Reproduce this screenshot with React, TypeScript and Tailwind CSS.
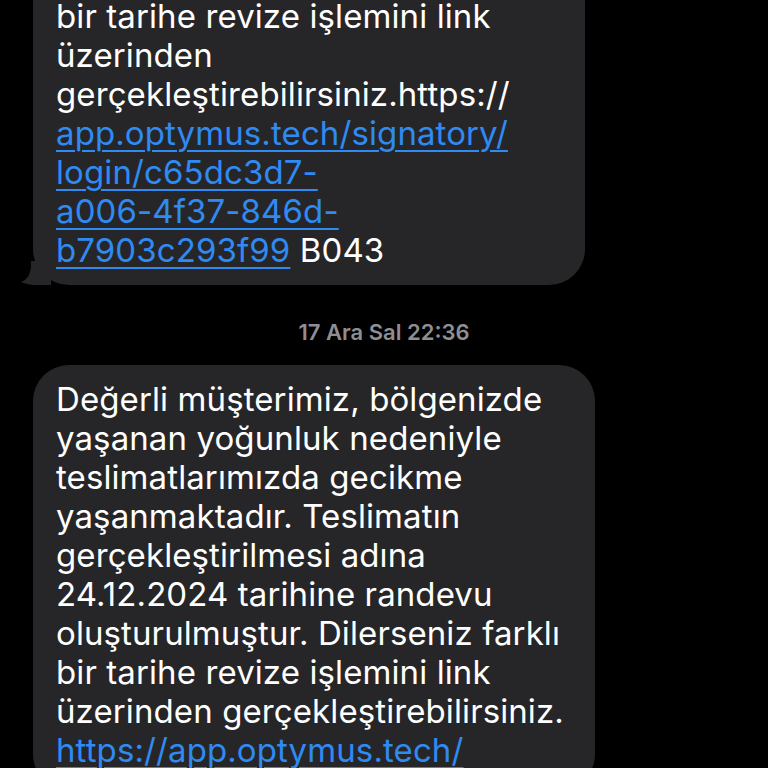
import React from 'react';

const FIRST = [
  { t: 'bir tarihe revize işlemini link' },
  { t: 'üzerinden' },
  { t: 'gerçekleştirebilirsiniz.https://' },
  { link: 'app.optymus.tech/signatory/' },
  { link: 'login/c65dc3d7-' },
  { link: 'a006-4f37-846d-' },
  { link: 'b7903c293f99', after: ' B043' },
];

const SECOND = [
  { t: 'Değerli müşterimiz, bölgenizde' },
  { t: 'yaşanan yoğunluk nedeniyle' },
  { t: 'teslimatlarımızda gecikme' },
  { t: 'yaşanmaktadır. Teslimatın' },
  { t: 'gerçekleştirilmesi adına' },
  { t: '24.12.2024 tarihine randevu' },
  { t: 'oluşturulmuştur. Dilerseniz farklı' },
  { t: 'bir tarihe revize işlemini link' },
  { t: 'üzerinden gerçekleştirebilirsiniz.' },
  { link: 'https://app.optymus.tech/' },
];

type Line = { t?: string; link?: string; after?: string };

function Lines({ lines }: { lines: Line[] }) {
  return (
    <>
      {lines.map((l, i) => (
        <div key={i} className="whitespace-nowrap">
          {l.t}
          {l.link && (
            <span className="text-[#2f8af2] underline decoration-2 underline-offset-[5px]">{l.link}</span>
          )}
          {l.after}
        </div>
      ))}
    </>
  );
}

export default function App() {
  return (
    <div
      className="h-[768px] w-[768px] overflow-hidden bg-black text-white"
      style={{ fontFamily: 'Inter, "Noto Sans", sans-serif' }}
    >
      <div className="flex flex-col px-[33px]">
        <div className="relative -mt-[3px] w-[552px] rounded-b-[36px] bg-[#262628] pb-[15px] pl-[23px] pt-0 text-[33px] leading-[39px] tracking-[0.1px]">
          <Lines lines={FIRST} />
          <svg className="absolute -left-[12px] bottom-0" width="30" height="24" viewBox="0 0 30 24">
            <path d="M30 0 L30 24 L14 24 C10 24 4 23 0 21 C6 19 10 13 10 4 L10 0 Z" fill="#262628" />
          </svg>
        </div>

        <div className="mt-[36px] mb-[22px] text-center text-[22px] font-semibold leading-[22px] text-[#8e8e93]">
          17 Ara Sal 22:36
        </div>

        <div className="w-[562px] rounded-[36px] bg-[#262628] pb-[20px] pl-[23px] pt-[15px] text-[33px] leading-[39px] tracking-[0.1px]">
          <Lines lines={SECOND} />
        </div>
      </div>
    </div>
  );
}
